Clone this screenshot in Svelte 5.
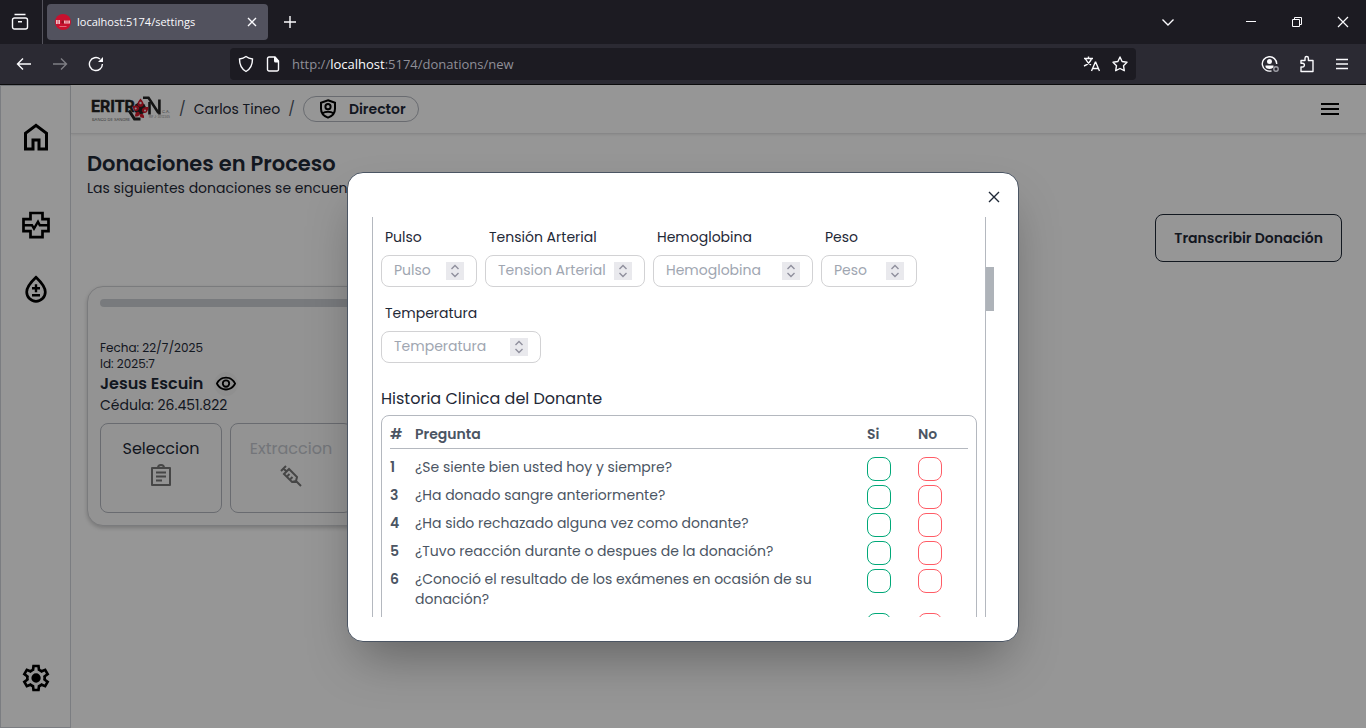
<script>
  const fields = [
    { id: 'pulso', label: 'Pulso', hint: 'Pulso', size: 'short' },
    { id: 'tension', label: 'Tensión Arterial', hint: 'Tension Arterial', size: 'long' },
    { id: 'hemoglobina', label: 'Hemoglobina', hint: 'Hemoglobina', size: 'long' },
    { id: 'peso', label: 'Peso', hint: 'Peso', size: 'short' },
    { id: 'temperatura', label: 'Temperatura', hint: 'Temperatura', size: 'long' }
  ];
  const questions = [
    { n: 1, text: '¿Se siente bien usted hoy y siempre?' },
    { n: 3, text: '¿Ha donado sangre anteriormente?' },
    { n: 4, text: '¿Ha sido rechazado alguna vez como donante?' },
    { n: 5, text: '¿Tuvo reacción durante o despues de la donación?' },
    { n: 6, text: '¿Conoció el resultado de los exámenes en ocasión de su donación?' },
    { n: 7, text: '' }
  ];
</script>

<div class="browser">
  <header class="tabs">
    <button class="chrome-btn view" aria-label="Firefox View">
      <svg width="18" height="18" viewBox="0 0 18 18"><path d="M3.500 1.500h11M3.500 5h11a2 2 0 0 1 2 2v7a2 2 0 0 1-2 2h-11a2 2 0 0 1-2-2V7a2 2 0 0 1 2-2zM7 8.700h4" /></svg>
    </button>
    <div class="tab">
      <svg class="favicon" width="16" height="16" viewBox="0 0 16 16"><circle cx="8" cy="8" r="8" fill="#c8102e" /><path d="M1 6h4v4H1zM9 6.500h6v3H9z" fill="#efb9c0" /><path d="M3 6v4M11 6v3M13 6v3" stroke="#c8102e" stroke-width=".6" /><path d="M6 8l2-2 1 2-1 2z" fill="#8d1022" /><path d="M4.500 12.500h7" stroke="#e8808e" stroke-width=".8" /></svg>
      <span>localhost:5174/settings</span>
      <button class="chrome-btn" aria-label="Cerrar pestaña"><svg width="10" height="10" viewBox="0 0 10 10"><path d="M1 1l8 8M9 1L1 9" /></svg></button>
    </div>
    <button class="chrome-btn plus" aria-label="Nueva pestaña"><svg width="14" height="14" viewBox="0 0 14 14"><path d="M7 1v12M1 7h12" /></svg></button>
    <div class="window-controls">
      <button class="chrome-btn" aria-label="Listar pestañas"><svg width="14" height="14" viewBox="0 0 14 14"><path d="M1.500 4.500L7 10l5.500-5.500" /></svg></button>
      <button class="chrome-btn far" aria-label="Minimizar"><svg width="12" height="12" viewBox="0 0 12 12"><path d="M1 5.500h10" stroke-width="1" /></svg></button>
      <button class="chrome-btn" aria-label="Restaurar"><svg width="12" height="12" viewBox="0 0 12 12"><path d="M1.500 3.500h7v7h-7zM3.500 3V1.500h7v7H9" stroke-width="1" /></svg></button>
      <button class="chrome-btn" aria-label="Cerrar"><svg width="12" height="12" viewBox="0 0 12 12"><path d="M1 1l10 10M11 1L1 11" stroke-width="1.200" /></svg></button>
    </div>
  </header>

  <div class="toolbar">
    <nav class="history">
      <button class="chrome-btn" aria-label="Atrás"><svg width="16" height="16" viewBox="0 0 16 16"><path d="M15 8H2M7 2.500L1.500 8 7 13.500" /></svg></button>
      <button class="chrome-btn dim" aria-label="Adelante"><svg width="16" height="16" viewBox="0 0 16 16"><path d="M1 8h13M9 2.500L14.500 8 9 13.500" /></svg></button>
      <button class="chrome-btn" aria-label="Recargar"><svg width="16" height="16" viewBox="0 0 16 16"><path d="M14.400 8A6.500 6.500 0 1 1 12 3" /><path d="M15 1v5h-5z" fill="#fbfbfe" stroke="none" /></svg></button>
    </nav>
    <div class="address">
      <svg width="16" height="18" viewBox="0 0 16 18"><path d="M8 1.500c2 1.500 4.300 2.200 6.500 2.500 0 6-2 10-6.500 12.500C3.500 14 1.500 10 1.500 4 3.700 3.700 6 3 8 1.500z" /></svg>
      <svg width="14" height="16" viewBox="0 0 14 16"><path d="M3 1h6l3.500 4v8.500A1.500 1.500 0 0 1 11 15H3a1.500 1.500 0 0 1-1.500-1.500v-11A1.500 1.500 0 0 1 3 1z" /><path d="M8 1h1.500L13 5v1.500H9.500A1.500 1.500 0 0 1 8 5z" fill="#fbfbfe" stroke="none" /></svg>
      <span class="url">http://<b>localhost</b>:5174/donations/new</span>
      <svg width="17" height="16" viewBox="0 0 17 16"><path d="M1 2.500h9M5.500.5v2M8.500 2.500C7.500 6 4.500 8.500 1 10M2.500 3C4 6 5.500 7.500 8 9M8.500 15L12.300 6.200h.4L16.500 15M9.800 12.500h5.400" /></svg>
      <svg width="16" height="16" viewBox="0 0 16 16"><path d="M8 1l2.100 4.500 4.900.7-3.500 3.500.8 5L8 12.500l-4.300 2.200.8-5L1 6.200l4.900-.7z" stroke-linejoin="round" /></svg>
    </div>
    <div class="tools">
      <button class="chrome-btn" aria-label="Cuenta"><svg width="18" height="18" viewBox="0 0 18 18"><path d="M10.500 15.800A7.200 7.200 0 1 1 15.700 9" /><circle cx="8.500" cy="6.500" r="2.500" fill="#fbfbfe" stroke="none" /><path d="M4.500 10.500h8v1.500c-1 2.500-7 2.500-8 0z" fill="#fbfbfe" stroke="none" /><circle cx="15" cy="14" r="2.200" stroke="#a0a0a8" /></svg></button>
      <button class="chrome-btn" aria-label="Extensiones"><svg width="16" height="18" viewBox="0 0 16 18"><path d="M2 16.500V12h1.500a1.800 1.800 0 0 0 0-3.800H2V5.500h4V3.200a1.700 1.700 0 0 1 3.400 0v2.300H14v11z" stroke-linejoin="round" /></svg></button>
      <button class="chrome-btn" aria-label="Menú"><svg width="14" height="14" viewBox="0 0 14 14"><path d="M1 2.500h12M1 7h12M1 11.500h12" /></svg></button>
    </div>
  </div>

  <div class="viewport">
    <aside class="sidebar">
      <a href="#inicio" aria-label="Inicio"><svg width="36" height="36" viewBox="0 -960 960 960"><path d="M240-200h120v-240h240v240h120v-360L480-740 240-560v360Zm-80 80v-480l320-240 320 240v480H520v-240h-80v240H160Z" /></svg></a>
      <a href="#clinica" class="clinic" aria-label="Clínica"><svg width="36" height="36" viewBox="0 0 36 36" fill="none" stroke="#000" stroke-width="2.700"><path d="M12.500 6h12v6.200h6v12h-6v6h-12v-6h-7v-12h7z" /><path d="M5 18.200h9l2 3.500 4-7 1.800 3.500h9" stroke-width="2.400" /></svg></a>
      <a href="#donaciones" class="blood" aria-label="Donaciones"><svg width="36" height="36" viewBox="0 0 36 36" fill="none" stroke="#000" stroke-width="2.700"><path d="M18 6.300C12.500 11.500 8.700 15.800 8.700 21a9.300 9.300 0 0 0 18.600 0c0-5.200-3.800-9.500-9.300-14.700z" /><path d="M14 17.300h8M18 13.300v8M14 24.300h8" stroke-width="2.400" /></svg></a>
      <a href="#ajustes" class="gear" aria-label="Ajustes"><svg width="32" height="32" viewBox="0 -960 960 960"><path d="m370-80-16-128q-13-5-24.500-12T307-235l-119 50L78-375l103-78q-1-7-1-13.500v-27q0-6.500 1-13.500L78-585l110-190 119 50q11-8 23-15t24-12l16-128h220l16 128q13 5 24.500 12t22.500 15l119-50 110 190-103 78q1 7 1 13.500v27q0 6.500-2 13.500l103 78-110 190-118-50q-11 8-23 15t-24 12L590-80H370Zm70-80h79l14-106q31-8 57.500-23.500T639-327l99 41 39-68-86-65q5-14 7-29.500t2-31.500q0-16-2-31.500t-7-29.500l86-65-39-68-99 42q-22-23-48.500-38.500T533-694l-13-106h-79l-14 106q-31 8-57.500 23.500T321-633l-99-41-39 68 86 64q-5 15-7 30t-2 32q0 16 2 31t7 30l-86 65 39 68 99-42q22 23 48.500 38.500T427-266l13 106Zm42-180q58 0 99-41t41-99q0-58-41-99t-99-41q-59 0-99.500 41T342-480q0 58 40.500 99t99.500 41Z" /></svg></a>
    </aside>

    <div class="content">
      <div class="navbar">
        <svg width="84" height="32" viewBox="0 0 84 32" role="img" aria-label="Eritron">
          <text x="4" y="19" font-family="Roboto" font-weight="700" font-size="16" fill="#222" stroke="#222" stroke-width=".4">ERITR</text>
          <path d="M42 17.500l5.500 8.500h6" fill="none" stroke="#222" stroke-width="3" />
          <path d="M56 4.700h5.500L71.500 20" fill="none" stroke="#222" stroke-width="2.600" />
          <path d="M62.500 9v12.500M72.400 6.500v15" fill="none" stroke="#222" stroke-width="2.600" />
          <circle cx="53" cy="15.500" r="6" fill="#222" />
          <g fill="#d6182a"><path d="M53.500 5.500c2.500 3 3.500 5 3 6.500-.8 2.500-5 2.500-6 0-.5-1.500.5-3.500 3-6.500z" /><path d="M45.500 13c3.500-1 5.500-.5 6.500 1 1 2-1.500 4.500-3.500 4-1.500-.5-2.500-2-3-5z" /><path d="M61.500 14c-.5 4-1.500 5.500-3.500 6-2.500.3-4-2.500-2.500-4.500 1-1.300 3-1.500 6-1.500z" /><path d="M48 23.500c0-3 1-4.500 2.500-4.700 2-.3 3 2 1.800 3.500-.8 1-2.300 1.300-4.300 1.200z" /><path d="M57 25c-3 0-4.200-1-4.200-2.500 0-1.800 2.200-2.500 3.400-1 .8.900 1 2 .8 3.500z" /></g>
          <circle cx="53.500" cy="10" r="1.200" fill="#eee" /><circle cx="48.700" cy="15.500" r="1" fill="#eee" /><circle cx="58" cy="17.500" r="1" fill="#eee" />
          <text x="5" y="28" font-family="Inter" font-size="4" fill="#666">BANCO DE SANGRE</text>
          <text x="75" y="20" font-family="Inter" font-size="4" fill="#777">C.A.</text>
          <text x="62" y="25" font-family="Inter" font-size="3" fill="#888">RIF J-3012345</text>
        </svg>
        <span class="slash">/</span>
        <span>Carlos Tineo</span>
        <span class="slash">/</span>
        <span class="role">
          <svg width="18" height="20" viewBox="0 0 18 20" fill="none" stroke="#000" stroke-width="2"><path d="M9 1.300l7 2.500v6c0 4-2.500 7.300-7 8.800-4.500-1.500-7-4.800-7-8.800v-6z" /><circle cx="9" cy="7.700" r="2.600" /><path d="M3.500 14.300c3-2.200 8-2.200 11 0" /></svg>
          <b>Director</b>
        </span>
        <button class="burger" aria-label="Abrir menú"><svg width="18" height="12" viewBox="0 0 18 12"><path d="M0 0h18v2H0zM0 5h18v2H0zM0 10h18v2H0z" /></svg></button>
      </div>
      <main>
        <h1>Donaciones en Proceso</h1>
        <p>Las siguientes donaciones se encuentran en proceso</p>
        <button class="transcribe">Transcribir Donación</button>
        <article class="card">
          <div class="progress"></div>
          <p class="meta">Fecha: 22/7/2025</p>
          <p class="meta">Id: 2025:7</p>
          <div class="person">
            <h2>Jesus Escuin</h2>
            <button aria-label="Ver donante"><svg width="22" height="22" viewBox="0 0 24 24"><path d="M12 6c3.790 0 7.170 2.130 8.820 5.500C19.170 14.870 15.790 17 12 17s-7.170-2.130-8.820-5.500C4.830 8.130 8.210 6 12 6m0-2C7 4 2.730 7.110 1 11.500 2.730 15.890 7 19 12 19s9.270-3.110 11-7.500C21.270 7.110 17 4 12 4z" /><circle cx="12" cy="11.500" r="3.500" fill="none" stroke="#000" stroke-width="2" /></svg></button>
          </div>
          <p>Cédula: 26.451.822</p>
          <div class="steps">
            <button>Seleccion<svg width="24" height="24" viewBox="0 0 24 24"><path d="M3 4h18v17H3zM9 4a3 3 0 0 1 6 0M7 8.500h10M7 12.500h10M7 16.500h6" stroke-linejoin="round" /></svg></button>
            <button disabled>Extraccion<svg width="24" height="24" viewBox="0 0 24 24"><path d="M2 7l5-5M4.500 4.500l3 3M5 10l5-5 8 8-1 4-4 1zM8.500 12l2-2M11.500 15l2-2M17 17l5 5" /></svg></button>
            <button disabled></button>
            <button disabled></button>
          </div>
        </article>
      </main>
    </div>

    <div class="backdrop">
      <div class="modal" role="dialog" aria-modal="true" aria-label="Historia clínica">
        <button class="close" aria-label="Cerrar"><svg width="12" height="12" viewBox="0 0 12 12"><path d="M1 1l10 10M11 1L1 11" /></svg></button>
        <div class="scroller">
          <form class="sheet">
            <div class="fields">
              {#each fields as f}
                <div class="field {f.size}">
                  <label for={f.id}>{f.label}</label>
                  <div class="box">
                    <input id={f.id} type="number" placeholder={f.hint} />
                    <svg width="18" height="18" viewBox="0 0 18 18"><path d="M5.500 7L9 3.500 12.500 7M5.500 11L9 14.500l3.500-3.500" /></svg>
                  </div>
                </div>
              {/each}
            </div>
            <h3>Historia Clinica del Donante</h3>
            <div class="frame">
              <table>
                <thead>
                  <tr><th class="num">#</th><th>Pregunta</th><th class="yes-col">Si</th><th class="no-col">No</th></tr>
                </thead>
                <tbody>
                  {#each questions as q}
                    <tr>
                      <th scope="row">{q.text ? q.n : ''}</th>
                      <td class="question">{q.text}</td>
                      <td><input class="yes" type="checkbox" aria-label="Si, pregunta {q.n}" /></td>
                      <td><input class="no" type="checkbox" aria-label="No, pregunta {q.n}" /></td>
                    </tr>
                  {/each}
                </tbody>
              </table>
            </div>
          </form>
          <div class="rail"><div class="thumb"></div></div>
        </div>
      </div>
    </div>
  </div>
</div>

<style>
  :global(body) { margin: 0; }
  * { box-sizing: border-box; }
  button { border: 0; background: none; padding: 0; font: inherit; color: inherit; }
  svg { display: block; flex: none; }
  h1, h2, h3, p { margin: 0; }
  b { font-weight: 600; }

  .browser { height: 100vh; display: flex; flex-direction: column; overflow: hidden; font: 14px/20px Poppins, Inter, sans-serif; color: #1f2937; }
  .tabs, .toolbar { display: flex; align-items: center; flex: none; font: 11px/16px "Segoe UI", "Open Sans", sans-serif; color: #fbfbfe; }
  .tabs { height: 44px; background: #1c1b22; }
  .toolbar { height: 41px; background: #2b2a33; border-bottom: 1px solid #0c0c0d; padding: 0 17px 0 16px; }
  .tabs svg:not(.favicon), .toolbar svg { fill: none; stroke: #fbfbfe; stroke-width: 1.4; }
  .chrome-btn { display: grid; place-items: center; }
  .view { width: 43px; height: 44px; padding-right: 2px; border-right: 1px solid #54535c; }
  .tab { width: 221px; height: 36px; margin-left: 4px; padding: 0 11px 0 8px; display: flex; align-items: center; gap: 6px; border-radius: 4px; background: #52525e; }
  .tab .chrome-btn { margin-left: auto; }
  .plus { margin-left: 15px; }
  .window-controls { margin-left: auto; padding-right: 17px; display: flex; align-items: center; gap: 34px; }
  .far { margin-left: 36px; }
  .history { display: flex; gap: 20px; }
  .dim { opacity: .4; }
  .address { flex: none; width: 68%; height: 32px; margin-left: 126px; padding: 0 8px; display: flex; align-items: center; gap: 12px; border-radius: 4px; background: #1c1b22; }
  .url { flex: 1; font-size: 13px; color: #8f8f98; }
  .url b { font-weight: 400; color: #fbfbfe; }
  .tools { margin-left: auto; display: flex; align-items: center; gap: 20px; }

  .viewport { position: relative; flex: 1; min-height: 0; display: flex; background: #fff; }
  .sidebar { width: 71px; border: 1px solid #d1d5db; border-top-color: #c4c9d0; display: flex; flex-direction: column; align-items: center; padding: 33px 0; }
  .clinic { margin-top: 52px; }
  .blood { margin-top: 28px; }
  .gear { margin-top: auto; }
  .content { flex: 1; min-width: 0; }
  .navbar { height: 49px; padding: 0 27px 0 16px; display: flex; align-items: center; gap: 8px; border-bottom: 1px solid #e5e5e7; box-shadow: 0 1px 2px rgba(0, 0, 0, .08); }
  .slash { color: #4b5563; }
  .role { height: 26px; padding: 0 12px 0 15px; display: flex; align-items: center; gap: 12px; border: 1px solid #b3b7bf; border-radius: 13px; }
  .burger { margin-left: auto; }
  main { padding: 16px 24px 0 16px; display: flex; flex-direction: column; align-items: flex-start; }
  h1 { font-size: 21px; line-height: 28px; font-weight: 600; }
  .transcribe { align-self: flex-end; height: 48px; margin-top: 16px; padding: 0 18px; border: 1px solid #1f2937; border-radius: 8px; font-weight: 600; }
  .card { margin-top: 24px; padding: 12px; border: 1px solid #d0d1d4; border-radius: 16px; background: #fafafa; box-shadow: 0 2px 4px rgba(0, 0, 0, .2); }
  .progress { height: 8px; margin-bottom: 33px; border-radius: 4px; background: #cdd0d4; }
  .meta { font-size: 12px; line-height: 16px; }
  .person { display: flex; align-items: center; gap: 11px; height: 23px; }
  .person button { padding: 1px; border-radius: 12px; background: #f3f3f3; }
  h2 { font-size: 16px; line-height: 24px; font-weight: 600; }
  .steps { display: flex; gap: 8px; margin-top: 8px; }
  .steps button { width: 122px; height: 90px; padding-top: 13px; display: flex; flex-direction: column; align-items: center; gap: 3px; border: 1px solid #b3b7bf; border-radius: 8px; font-size: 16px; line-height: 24px; }
  .steps button:disabled { color: #c4c8cf; }
  .steps svg { fill: none; stroke: #777; stroke-width: 2; }

  .backdrop { position: absolute; inset: 0; display: grid; place-items: center; background: rgba(0, 0, 0, .41); }
  .modal { position: relative; width: 672px; max-width: 96%; padding: 44px 24px 24px; border: 1px solid #4b5563; border-radius: 16px; background: #fff; box-shadow: 0 25px 50px -12px rgba(0, 0, 0, .35); }
  .close { position: absolute; top: 8px; right: 8px; width: 32px; height: 32px; display: grid; place-items: center; }
  .close svg { stroke: #1f2937; stroke-width: 1.4; }
  .scroller { height: 400px; display: flex; overflow: hidden; }
  .sheet { flex: 1; min-width: 0; padding: 2px 8px 0; border: solid #b4b8bf; border-width: 0 1px; }
  .rail { width: 8px; padding-top: 50px; }
  .thumb { height: 44px; background: #aeb3b9; }
  .fields { display: flex; flex-wrap: wrap; gap: 0 8px; }
  .field { padding-bottom: 8px; }
  .short { width: 96px; }
  .long { width: 160px; }
  .field label { display: block; padding: 8px 4px; }
  .box { height: 32px; padding: 0 12px; display: flex; align-items: center; border: 1px solid #d2d2d4; border-radius: 8px; }
  .box input { flex: 1; width: 0; height: 30px; padding: 0; border: 0; outline: 0; background: none; font: inherit; appearance: textfield; }
  .box input::-webkit-inner-spin-button { appearance: none; display: none; margin: 0; }
  .box input::placeholder { color: #a0a6b1; opacity: 1; }
  .box svg { background: #e9e9ed; fill: none; stroke: #8f8f9d; stroke-width: 1.4; }
  h3 { margin: 16px 0 4px; font-size: 16px; line-height: 24px; font-weight: 400; }
  .frame { padding: 8px; border: 1px solid #b4b8bf; border-radius: 8px; }
  table { width: 100%; border-spacing: 0; table-layout: fixed; color: #4b5563; }
  th, td { padding: 0 0 4px; text-align: left; vertical-align: top; font-weight: 400; }
  th { font-weight: 600; }
  thead th { border-bottom: 1px solid #b4b8bf; }
  tbody tr:first-child > * { padding-top: 8px; }
  .num { width: 25px; }
  .yes-col { width: 51px; }
  .no-col { width: 50px; }
  .question { padding-right: 40px; }
  td input { display: block; appearance: none; width: 24px; height: 24px; margin: 0; border: 1px solid #00a878; border-radius: 8px; }
  td .no { border-color: #ff5c66; }
</style>
